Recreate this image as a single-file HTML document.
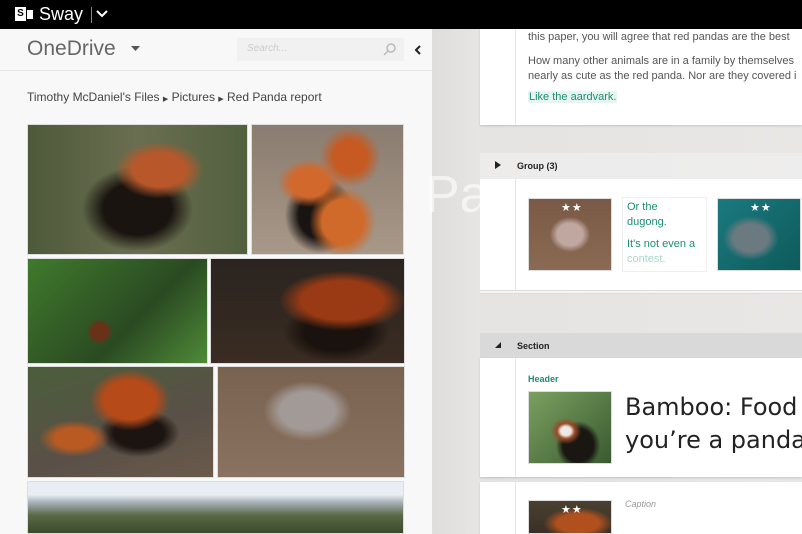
<!DOCTYPE html>
<html style="width:802px;height:534px;overflow:hidden"><head><meta charset="utf-8"><style>
*{margin:0;padding:0;box-sizing:border-box}
body{width:802px;height:534px;overflow:hidden;position:relative;font-family:"Liberation Sans",sans-serif;background:linear-gradient(90deg,#eeeceb,#e4e2e0 40%,#e9e7e6)}
.abs{position:absolute}
.top{left:0;top:0;width:802px;height:29px;background:#000}
.left{left:0;top:29px;width:433px;height:505px;background:#f8f8f8;border-right:1px solid #e3e3e3}
.ph{position:absolute;border:1px solid #ddd}
.card{position:absolute;background:#fff;box-shadow:0 1px 2px rgba(0,0,0,.15)}
.vl{position:absolute;top:0;bottom:0;left:35px;width:1px;background:#e6e6e6}
.star{color:#fff;font-size:11px;position:absolute;letter-spacing:1px}
</style></head><body>
<div class="abs top">
 <div class="abs" style="left:15px;top:7px;width:11px;height:14px;background:#fff;color:#000;font-size:10px;font-weight:bold;line-height:14px;text-align:center">S</div>
 <div class="abs" style="left:26px;top:9px;width:8px;height:11px;background:#fff;border:1px solid #000"></div>
 <div class="abs" style="left:39px;top:4px;color:#fff;font-size:18px">Sway</div>
 <div class="abs" style="left:91px;top:7px;width:1px;height:16px;background:#888"></div>
 <svg class="abs" style="left:96px;top:10px" width="12" height="8"><path d="M1 1L6 6L11 1" stroke="#fff" stroke-width="2" fill="none"/></svg>
</div>
<div class="abs left">
 <div class="abs" style="left:27px;top:8px;font-size:21px;color:#666">OneDrive</div>
 <svg class="abs" style="left:131px;top:17px" width="9" height="5"><path d="M0 0H9L4.5 5Z" fill="#555"/></svg>
 <div class="abs" style="left:237px;top:9px;width:167px;height:23px;background:#f1f1f1"><span style="position:absolute;left:10px;top:5px;font-size:10px;color:#ccc;font-style:italic">Search...</span>
 <svg style="position:absolute;left:146px;top:5px" width="13" height="13"><circle cx="8" cy="5" r="4" stroke="#bbb" stroke-width="1.5" fill="none"/><path d="M5 8L1 12" stroke="#bbb" stroke-width="1.5"/></svg></div>
 <svg class="abs" style="left:414px;top:16px" width="8" height="10"><path d="M6 1L2 5L6 9" stroke="#222" stroke-width="2" fill="none"/></svg>
 <div class="abs" style="left:0;top:41px;width:432px;height:1px;background:#e6e6e6"></div>
 <div class="abs" style="left:27px;top:61px;font-size:12px;color:#444">Timothy McDaniel's Files <span style="font-size:7px">▶</span> Pictures <span style="font-size:7px">▶</span> Red Panda report</div>
</div>
<div class="ph" style="left:27px;top:124px;width:221px;height:131px;background:radial-gradient(ellipse at 60% 35%,#b8582a 0 14%,transparent 24%),radial-gradient(ellipse at 50% 65%,#1a1410 0 22%,transparent 36%),linear-gradient(90deg,#4d5a3a,#6a6e50 50%,#52603e)"></div>
<div class="ph" style="left:251px;top:124px;width:153px;height:131px;background:radial-gradient(ellipse at 38% 45%,#d2682c 0 14%,transparent 24%),radial-gradient(ellipse at 65% 25%,#c65a22 0 12%,transparent 22%),radial-gradient(ellipse at 60% 75%,#d06a2a 0 16%,transparent 26%),radial-gradient(ellipse at 45% 70%,#181412 0 18%,transparent 30%),linear-gradient(#8a7c70,#a89888)"></div>
<div class="ph" style="left:27px;top:258px;width:181px;height:106px;background:radial-gradient(circle at 40% 70%,#6a3018 0 6%,transparent 10%),linear-gradient(135deg,#3f7a2c,#2a4a22 60%,#4f8a38)"></div>
<div class="ph" style="left:210px;top:258px;width:195px;height:106px;background:radial-gradient(ellipse at 68% 40%,#9a3a14 0 22%,transparent 34%),radial-gradient(ellipse at 65% 70%,#1a120e 0 18%,transparent 30%),linear-gradient(#2a2420,#3a2c22)"></div>
<div class="ph" style="left:27px;top:366px;width:187px;height:112px;background:radial-gradient(ellipse at 55% 30%,#b64a18 0 18%,transparent 28%),radial-gradient(ellipse at 25% 65%,#b85a22 0 10%,transparent 18%),radial-gradient(ellipse at 60% 60%,#1c1410 0 16%,transparent 26%),linear-gradient(160deg,#4a5e3a,#5a5048 60%,#6a5a4a)"></div>
<div class="ph" style="left:217px;top:366px;width:188px;height:112px;background:radial-gradient(ellipse at 48% 40%,#a29a96 0 20%,transparent 32%),linear-gradient(#7a6250,#8a7260)"></div>
<div class="ph" style="left:27px;top:481px;width:377px;height:53px;background:linear-gradient(#e8eef4 0 25%,#a8b0b8 40%,#5a6a48 65%,#3a4a2a)"></div>
<div class="abs" style="left:432px;top:29px;width:48px;height:505px;background:linear-gradient(90deg,rgba(220,218,216,.6),rgba(235,233,231,.3))"></div>
<div class="abs" style="left:425px;top:165px;font-size:52px;color:rgba(255,255,255,.6)">Pa</div>

<div class="card" style="left:480px;top:29px;width:322px;height:96px"><div class="vl"></div>
 <div class="abs" style="left:48px;top:2px;font-size:11px;color:#555;white-space:nowrap">this paper, you will agree that red pandas are the best</div>
 <div class="abs" style="left:48px;top:25px;font-size:11px;color:#555;white-space:nowrap;line-height:15px">How many other animals are in a family by themselves<br>nearly as cute as the red panda. Nor are they covered i</div>
 <div class="abs" style="left:48px;top:62px;font-size:11px;color:#1e8c74;background:#e6f5f0;padding:0 1px">Like the aardvark.</div>
</div>
<div class="abs" style="left:480px;top:153px;width:322px;height:26px;background:rgba(240,240,240,.7)">
 <svg class="abs" style="left:15px;top:8px" width="6" height="8"><path d="M0 0L6 4L0 8Z" fill="#222"/></svg>
 <div class="abs" style="left:37px;top:8px;font-size:9px;font-weight:bold;color:#222">Group (3)</div></div>
<div class="card" style="left:480px;top:179px;width:322px;height:111px;box-shadow:0 1px 0 #ddd,0 3px 0 #f4f4f4,0 4px 0 #ddd"><div class="vl"></div>
 <div class="abs" style="left:48px;top:19px;width:84px;height:73px;border:1px solid #ddd;background:radial-gradient(ellipse at 50% 50%,#c0a8a0 0 22%,transparent 35%),linear-gradient(#7a5a46,#8a6a52)"><span class="star" style="left:32px;top:2px">★★</span></div>
 <div class="abs" style="left:142px;top:18px;width:85px;height:75px;border:1px solid #eee;font-size:11px;color:#1e8c74;line-height:15px;padding:2px 4px">Or the<br>dugong.<div style="margin-top:7px">It's not even a<br><span style="color:#a8d8cc">contest.</span></div></div>
 <div class="abs" style="left:237px;top:19px;width:84px;height:73px;border:1px solid #ddd;background:radial-gradient(ellipse at 40% 55%,#6a7a80 0 25%,transparent 40%),linear-gradient(135deg,#1a7a80,#0e5a5a)"><span class="star" style="left:32px;top:2px">★★</span></div>
</div>
<div class="abs" style="left:480px;top:333px;width:322px;height:25px;background:#d9d9d9">
 <svg class="abs" style="left:15px;top:9px" width="6" height="6"><path d="M6 0L6 6L0 6Z" fill="#222"/></svg>
 <div class="abs" style="left:37px;top:8px;font-size:9px;font-weight:bold;color:#222">Section</div></div>
<div class="card" style="left:480px;top:358px;width:322px;height:119px"><div class="vl"></div>
 <div class="abs" style="left:48px;top:16px;font-size:9px;font-weight:bold;color:#1e8c74">Header</div>
 <div class="abs" style="left:48px;top:33px;width:84px;height:73px;border:1px solid #ddd;background:radial-gradient(ellipse at 45% 55%,#ece8e4 0 8%,#9a4a26 14%,transparent 24%),radial-gradient(ellipse at 60% 75%,#1a1612 0 22%,transparent 32%),linear-gradient(135deg,#7aa060,#3a5a30)"></div>
 <div class="abs" style="left:145px;top:33px;font-size:24px;color:#222;line-height:33px;white-space:nowrap;font-family:'DejaVu Sans',sans-serif">Bamboo: Food<br>you’re a panda</div>
</div>
<div class="card" style="left:480px;top:482px;width:322px;height:52px"><div class="vl"></div>
 <div class="abs" style="left:48px;top:18px;width:84px;height:34px;border:1px solid #ddd;background:radial-gradient(ellipse at 60% 70%,#b0501e 0 30%,transparent 50%),linear-gradient(#4a4030,#3a3026)"><span class="star" style="left:32px;top:2px">★★</span></div>
 <div class="abs" style="left:145px;top:17px;font-size:9px;font-style:italic;color:#999">Caption</div>
</div>
</body></html>
